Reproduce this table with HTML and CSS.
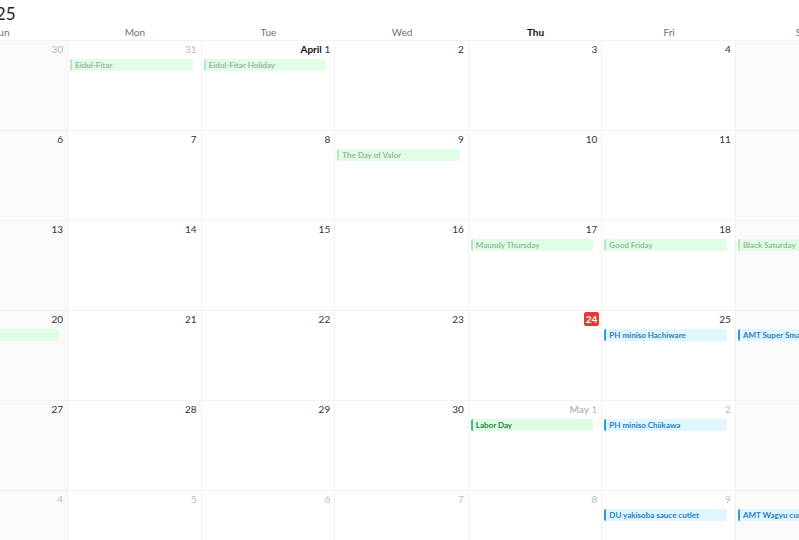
FILE: index.html
```html
<!DOCTYPE html>
<html>
<head>
<meta charset="utf-8">
<link rel="stylesheet" href="styles.css">
</head>
<body>
<div class="cal">
  <div class="title">April 2025</div>
  <div class="head">
    <div class="dow">Sun</div><div class="dow">Mon</div><div class="dow">Tue</div><div class="dow">Wed</div><div class="dow today">Thu</div><div class="dow">Fri</div><div class="dow">Sat</div>
  </div>
  <div class="grid">
    <!-- week 1 -->
    <div class="cell we"><div class="num off">30</div></div>
    <div class="cell"><div class="num off">31</div><div class="ev green past">Eidul-Fitar</div></div>
    <div class="cell"><div class="num"><b>April</b> 1</div><div class="ev green past">Eidul-Fitar Holiday</div></div>
    <div class="cell"><div class="num">2</div></div>
    <div class="cell"><div class="num">3</div></div>
    <div class="cell"><div class="num">4</div></div>
    <div class="cell we"><div class="num">5</div></div>
    <!-- week 2 -->
    <div class="cell we"><div class="num">6</div></div>
    <div class="cell"><div class="num">7</div></div>
    <div class="cell"><div class="num">8</div></div>
    <div class="cell"><div class="num">9</div><div class="ev green past">The Day of Valor</div></div>
    <div class="cell"><div class="num">10</div></div>
    <div class="cell"><div class="num">11</div></div>
    <div class="cell we"><div class="num">12</div></div>
    <!-- week 3 -->
    <div class="cell we"><div class="num">13</div></div>
    <div class="cell"><div class="num">14</div></div>
    <div class="cell"><div class="num">15</div></div>
    <div class="cell"><div class="num">16</div></div>
    <div class="cell"><div class="num">17</div><div class="ev green past">Maundy Thursday</div></div>
    <div class="cell"><div class="num">18</div><div class="ev green past">Good Friday</div></div>
    <div class="cell we"><div class="num">19</div><div class="ev green past">Black Saturday</div></div>
    <!-- week 4 -->
    <div class="cell we"><div class="num">20</div><div class="ev green past">Easter Sunday</div></div>
    <div class="cell"><div class="num">21</div></div>
    <div class="cell"><div class="num">22</div></div>
    <div class="cell"><div class="num">23</div></div>
    <div class="cell"><div class="num"><span class="badge">24</span></div></div>
    <div class="cell"><div class="num">25</div><div class="ev blue">PH miniso Hachiware</div></div>
    <div class="cell we"><div class="num">26</div><div class="ev blue">AMT Super Smash Burger</div></div>
    <!-- week 5 -->
    <div class="cell we"><div class="num">27</div></div>
    <div class="cell"><div class="num">28</div></div>
    <div class="cell"><div class="num">29</div></div>
    <div class="cell"><div class="num">30</div></div>
    <div class="cell"><div class="num off"><b>May</b> 1</div><div class="ev green">Labor Day</div></div>
    <div class="cell"><div class="num off">2</div><div class="ev blue">PH miniso Chiikawa</div></div>
    <div class="cell we"><div class="num off">3</div></div>
    <!-- week 6 -->
    <div class="cell we"><div class="num off">4</div></div>
    <div class="cell"><div class="num off">5</div></div>
    <div class="cell"><div class="num off">6</div></div>
    <div class="cell"><div class="num off">7</div></div>
    <div class="cell"><div class="num off">8</div></div>
    <div class="cell"><div class="num off">9</div><div class="ev blue">DU yakisoba sauce cutlet</div></div>
    <div class="cell we"><div class="num off">10</div><div class="ev blue">AMT Wagyu curry rice</div></div>
  </div>
</div>
</body>
</html>
```
FILE: styles.css
```css
html, body {
  margin: 0;
  padding: 0;
  background: #fff;
  overflow: hidden;
}
body {
  font-family: Lato, "Open Sans", "Liberation Sans", sans-serif;
  color: #333;
}
.cal {
  width: 935px;
  margin-left: -65.5px;
}
.title {
  height: 22px;
  padding-left: 2px;
  font-size: 17px;
  line-height: 27px;
  color: #222;
}
.head {
  display: grid;
  grid-template-columns: repeat(7, 1fr);
  height: 18px;
  border-bottom: 1px solid #f2f2f2;
}
.dow {
  text-align: center;
  font-size: 10px;
  line-height: 20px;
  color: #6f6f6f;
}
.dow.today {
  font-weight: 700;
  color: #111;
}
.grid {
  display: grid;
  grid-template-columns: repeat(7, 1fr);
  grid-auto-rows: 90px;
}
.cell {
  border-right: 1px solid #f2f2f2;
  border-bottom: 1px solid #f2f2f2;
  display: flex;
  flex-direction: column;
  gap: 3px;
  padding-top: 1px;
  min-width: 0;
}
.cell.we {
  background: #fafafa;
}
.num {
  text-align: right;
  font-size: 10px;
  line-height: 14px;
  height: 14px;
  padding-right: 4px;
  color: #333;
}
.num b {
  font-weight: 700;
  color: #111;
}
.num.off {
  color: #bbb;
}
.num.off b {
  color: #bbb;
  font-weight: 700;
}
.badge {
  display: inline-block;
  background: #e53935;
  color: #fff;
  font-weight: 700;
  border-radius: 2px;
  padding: 0 2px;
  line-height: 14px;
  margin-right: -2px;
}
.ev {
  margin: 0 8px 0 2px;
  height: 12px;
  line-height: 12px;
  font-size: 8px;
  font-weight: 700;
  padding-left: 3px;
  border-radius: 2px;
  white-space: nowrap;
  overflow: hidden;
}
.ev.green {
  background: #dcfde4;
  border-left: 2px solid #3fbf66;
  color: #2f7d45;
}
.ev.green.past {
  background: #e1fce7;
  border-left-color: #b3e6c1;
  color: #98b8a0;
}
.ev.blue {
  background: #e0f5fe;
  border-left: 2px solid #2b9be0;
  color: #1f7fc4;
}
```
